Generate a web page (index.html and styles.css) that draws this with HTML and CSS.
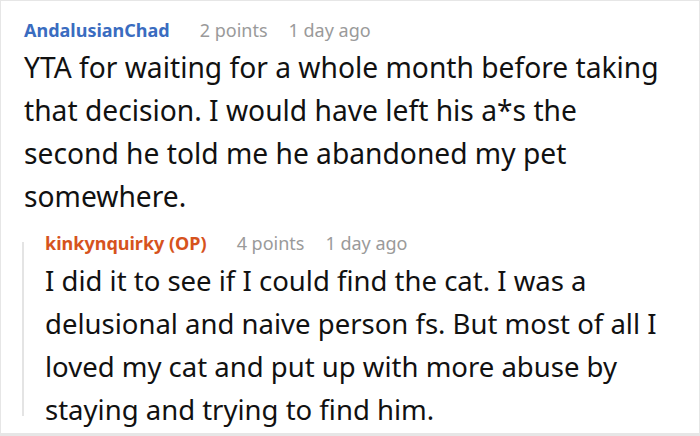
FILE: index.html
```html
<!DOCTYPE html>
<html>
<head>
<meta charset="utf-8">
<link rel="stylesheet" href="styles.css">
</head>
<body>
<div class="thread">
  <div class="comment">
    <div class="meta">
      <span class="author">AndalusianChad</span>
      <span class="info">2 points</span>
      <span class="info">1 day ago</span>
    </div>
    <p class="text">YTA for waiting for a whole month before taking that decision. I would have left his a*s the<br>second he told me he abandoned my pet somewhere.</p>
  </div>
  <div class="reply">
    <div class="meta">
      <span class="author op">kinkynquirky (OP)</span>
      <span class="info">4 points</span>
      <span class="info">1 day ago</span>
    </div>
    <p class="text">I did it to see if I could find the cat. I was a delusional and naive person fs. But most of all I loved my cat and put up with more abuse by staying and trying to find him.</p>
  </div>
</div>
</body>
</html>
```
FILE: styles.css
```css
html, body {
  margin: 0;
  padding: 0;
  background: #fff;
}
.thread {
  box-sizing: border-box;
  width: 700px;
  height: 436px;
  border: 1px solid #e6e6e6;
  border-bottom-width: 3px;
  padding: 16px 18px 0 23px;
  font-family: "Noto Sans", "Open Sans", sans-serif;
  overflow: hidden;
}
.meta {
  display: flex;
  gap: 21px;
  font-size: 18px;
  line-height: 26px;
  align-items: baseline;
}
.author {
  color: #3a6cc0;
  font-weight: bold;
  margin-right: 9px;
}
.author.op {
  color: #d6531d;
}
.info {
  color: #9a9a9a;
}
.text {
  margin: 3px 0 0;
  font-size: 28.2px;
  line-height: 43px;
  color: #111;
}
.reply {
  position: relative;
  margin-top: 12px;
  padding-left: 21px;
}
.reply .text {
  font-size: 27.5px;
}
.reply::before {
  content: "";
  position: absolute;
  left: -2px;
  top: 12px;
  bottom: 15px;
  width: 2px;
  background: #e4e4e4;
}
```
